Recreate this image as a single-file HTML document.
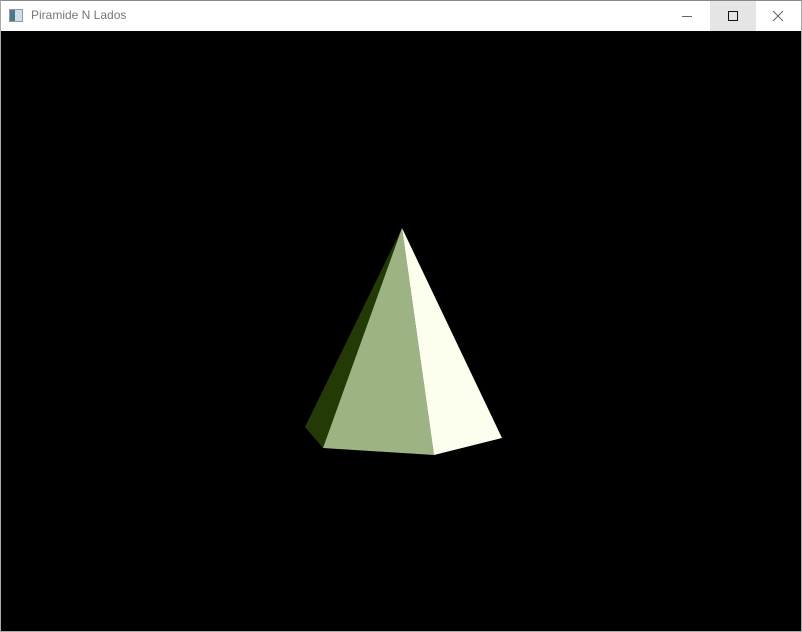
<!DOCTYPE html>
<html><head><meta charset="utf-8"><style>
html,body{margin:0;padding:0;width:802px;height:631px;overflow:hidden;background:#000}
.win{position:absolute;left:0;top:0;width:800px;height:630px;border:1px solid #aaa;border-top:1px solid #888;background:#000}
.tb{position:absolute;left:0;top:0;width:800px;height:30px;background:#fff}
.t{position:absolute;left:30px;top:7px;font:12px "Liberation Sans",sans-serif;color:#777}
.ic{position:absolute;left:8px;top:8px;width:12px;height:11px;border:1px solid #999;background:linear-gradient(90deg,#4a7a8a 0 40%,#cde 40% 100%)}
.max{position:absolute;left:709px;top:0;width:46px;height:30px;background:#e5e5e5}
</style></head><body>
<div class="win">
<div class="tb">
<div class="ic"></div>
<div class="t">Piramide N Lados</div>
<svg style="position:absolute;left:680px;top:9px" width="12" height="12"><line x1="1" y1="6.5" x2="11" y2="6.5" stroke="#666" stroke-width="1"/></svg>
<div class="max"><svg style="position:absolute;left:17px;top:9px" width="12" height="12"><rect x="1.5" y="1.5" width="9" height="9" fill="none" stroke="#111" stroke-width="1"/></svg></div>
<svg style="position:absolute;left:771px;top:9px" width="12" height="12"><path d="M1 1L11 11M11 1L1 11" stroke="#666" stroke-width="1"/></svg>
</div>
</div>
<svg style="position:absolute;left:0;top:0" width="802" height="631">
<polygon points="402,228 305,427 323,448" fill="#233a07"/>
<polygon points="402,228 323,448 434,455" fill="#9eb383"/>
<polygon points="402,228 434,455 502,438" fill="#fdffee"/>
</svg>
</body></html>
